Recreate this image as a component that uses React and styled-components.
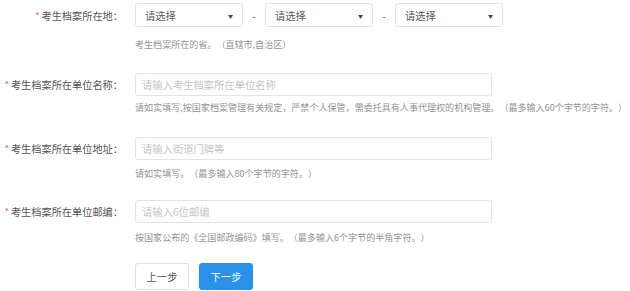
import React from 'react';
import styled, { createGlobalStyle } from 'styled-components';

const GlobalStyle = createGlobalStyle`
    html, body {
        margin: 0;
        padding: 0;
        background: #fff;
        font-family: "Noto Sans CJK SC", "Liberation Sans", sans-serif;
        text-spacing-trim: space-all;
    }
`;

const Form = styled.form`
    width: 630px;
    padding-top: 3px;
    display: flex;
    flex-direction: column;
`;

const Row = styled.div`
    display: grid;
    grid-template-columns: 123px 1fr;
    column-gap: 12px;
    margin-bottom: ${(p) => p.$gap}px;
`;

const Label = styled.label`
    display: flex;
    align-items: center;
    justify-content: flex-end;
    height: ${(p) => p.$h}px;
    font-size: 10.2px;
    color: #555;
    white-space: nowrap;
    & .star {
        color: #f05a4a;
        font-size: 9px;
        margin-right: 2px;
    }
`;

const Field = styled.div`
    display: flex;
    flex-direction: column;
`;

const SelectGroup = styled.div`
    display: flex;
    align-items: center;
`;

const Dash = styled.span`
    width: 22px;
    text-align: center;
    font-size: 10px;
    color: #555;
`;

const Select = styled.div`
    box-sizing: border-box;
    width: 108px;
    height: 24px;
    border: 1px solid #e3e3e3;
    border-radius: 3px;
    display: flex;
    align-items: center;
    justify-content: space-between;
    padding: 0 9px 0 9px;
    font-size: 10.3px;
    color: #5a5a5a;
    & .arrow {
        font-size: 5px;
        color: #444;
    }
`;

const Input = styled.input`
    box-sizing: border-box;
    width: 357px;
    height: 23px;
    border: 1px solid #e3e3e3;
    border-radius: 3px;
    padding: 0 6px;
    font-family: inherit;
    font-size: 10.3px;
    color: #555;
    outline: none;
    &::placeholder {
        color: #c6c6c6;
    }
`;

const Help = styled.div`
    margin-top: ${(p) => p.$top}px;
    font-size: 9.05px;
    line-height: 12px;
    color: #949494;
    white-space: nowrap;
`;

const Buttons = styled.div`
    display: flex;
    gap: 10px;
    padding-left: 135px;
`;

const Button = styled.button`
    box-sizing: border-box;
    width: 54px;
    height: 27px;
    border-radius: 3px;
    font-family: inherit;
    font-size: 10.3px;
    cursor: pointer;
    border: 1px solid ${(p) => (p.$primary ? '#2b90e8' : '#e0e0e0')};
    background: ${(p) => (p.$primary ? '#2b90e8' : '#fff')};
    color: ${(p) => (p.$primary ? '#fff' : '#555')};
`;

const Star = () => <span className="star">*</span>;

const Picker = () => (
    <Select>
        <span>请选择</span>
        <span className="arrow">▼</span>
    </Select>
);

const App = () => (
    <>
        <GlobalStyle />
        <Form lang="zh-CN">
            <Row $gap={22}>
                <Label $h={24}><Star />考生档案所在地：</Label>
                <Field>
                    <SelectGroup>
                        <Picker />
                        <Dash>-</Dash>
                        <Picker />
                        <Dash>-</Dash>
                        <Picker />
                    </SelectGroup>
                    <Help $top={12}>考生档案所在的省。（直辖市,自治区）</Help>
                </Field>
            </Row>
            <Row $gap={23}>
                <Label $h={23}><Star />考生档案所在单位名称：</Label>
                <Field>
                    <Input placeholder="请输入考生档案所在单位名称" />
                    <Help $top={6}>请如实填写,按国家档案管理有关规定，严禁个人保管，需委托具有人事代理权的机构管理。（最多输入60个字节的字符。）</Help>
                </Field>
            </Row>
            <Row $gap={20}>
                <Label $h={23}><Star />考生档案所在单位地址：</Label>
                <Field>
                    <Input placeholder="请输入街道门牌等" />
                    <Help $top={8}>请如实填写。（最多输入80个字节的字符。）</Help>
                </Field>
            </Row>
            <Row $gap={19}>
                <Label $h={23}><Star />考生档案所在单位邮编：</Label>
                <Field>
                    <Input placeholder="请输入6位邮编" />
                    <Help $top={9}>按国家公布的《全国邮政编码》填写。（最多输入6个字节的半角字符。）</Help>
                </Field>
            </Row>
            <Buttons>
                <Button type="button">上一步</Button>
                <Button type="button" $primary>下一步</Button>
            </Buttons>
        </Form>
    </>
);

export default App;
